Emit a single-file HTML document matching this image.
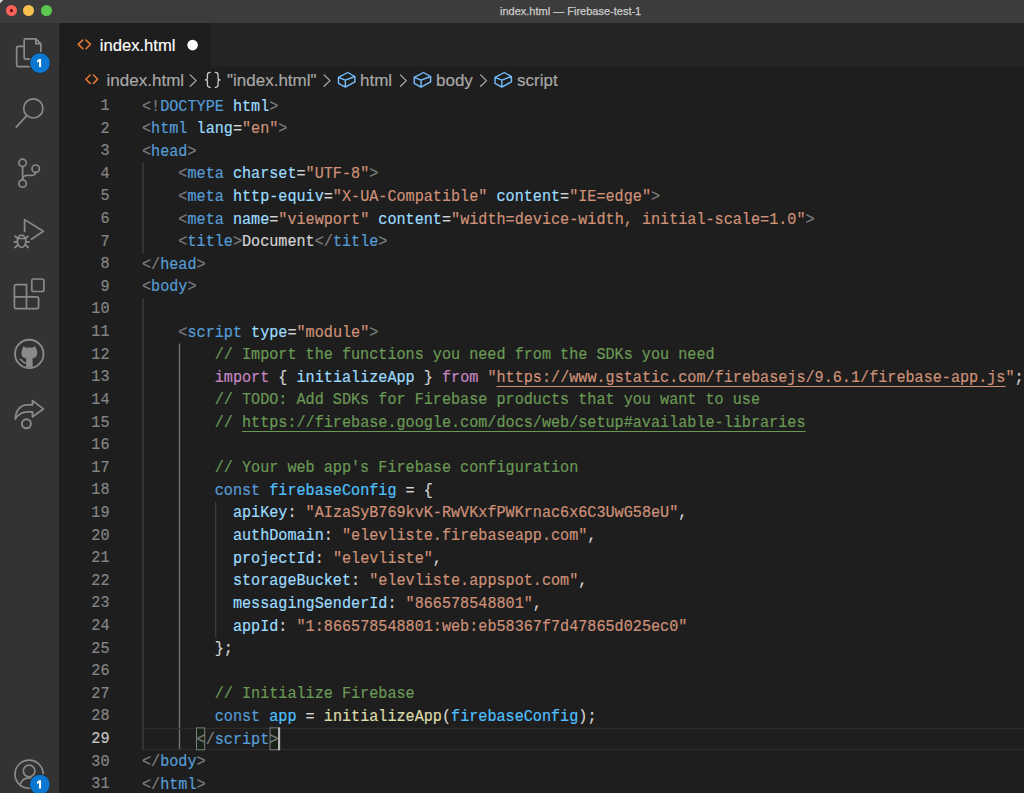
<!DOCTYPE html>
<html><head><meta charset="utf-8">
<style>
*{margin:0;padding:0;box-sizing:border-box}
html,body{width:1024px;height:793px;overflow:hidden;background:#1e1e1e}
body{position:relative;font-family:"Liberation Sans",sans-serif}
#title{position:absolute;left:0;top:0;width:1024px;height:23px;background:#3c3c3c}
#title .t{position:absolute;left:500px;top:5px;font-size:11px;color:#cccccc;white-space:pre;letter-spacing:0;-webkit-text-stroke:0.25px}
.tl{position:absolute;top:4.95px;width:11px;height:11px;border-radius:50%}
#act{position:absolute;left:0;top:23px;width:59px;height:770px;background:#333333}
#tabs{position:absolute;left:59px;top:23px;width:965px;height:43px;background:#252526}
#tab{position:absolute;left:60px;top:23px;width:150.6px;height:43px;background:#1e1e1e}
#tab .t{position:absolute;left:39.8px;top:13px;font-size:16.6px;color:#ffffff;white-space:pre;-webkit-text-stroke:0.15px}
#crumbs{position:absolute;left:59px;top:66px;width:965px;height:27px;background:#1e1e1e}
.cr{position:absolute;top:70.6px;font-size:17px;color:#a9a9a9;white-space:pre;-webkit-text-stroke:0.15px}
#code{position:absolute;left:142px;top:95.5px;font-family:"Liberation Mono",monospace;font-size:16.5px;line-height:22.62px;color:#d4d4d4;white-space:pre;transform-origin:0 0;transform:scaleX(0.91786);-webkit-text-stroke:0.2px}
#nums{position:absolute;left:50px;width:59.5px;top:95px;font-family:"Liberation Mono",monospace;font-size:16.5px;line-height:22.62px;color:#858585;white-space:pre;text-align:right;transform-origin:100% 0;transform:scaleX(0.91786);-webkit-text-stroke:0.2px}
#nums .cur{color:#c6c6c6}
.ln{height:22.62px}
svg{position:absolute;overflow:visible}
.g{position:absolute;width:1px;background:#404040}
.ga{background:#707070}
.bm{position:absolute;top:727.8px;width:8.7px;height:22.2px;background:#1a2a1a;border:1px solid #7a7a7a}
</style></head><body>
<div id="title"><div class="t">index.html — Firebase-test-1</div></div>
<div class="tl" style="left:5.85px;background:#fa6158"></div>
<div class="tl" style="left:23.4px;background:#f6c04f"></div>
<div class="tl" style="left:40.7px;background:#5dc650"></div>
<div style="position:absolute;left:9.65px;top:8.75px;width:3.4px;height:3.4px;border-radius:50%;background:#4d0000"></div>
<div id="act"></div>
<svg style="left:0;top:0" width="6" height="6"><path d="M0 0 H3.2 L0 3.2 Z" fill="#d8d8d8"/></svg>
<div id="tabs"></div>
<div id="tab"><div class="t">index.html</div></div>
<div id="crumbs"></div>

<!-- activity icons -->
<svg style="left:0;top:0" width="59" height="793" viewBox="0 0 59 793" fill="none" stroke="#8a8a8a" stroke-width="1.7" stroke-linecap="round" stroke-linejoin="round">
  <!-- explorer -->
  <path d="M24.15 46.4 H18.15 Q16.65 46.4 16.65 47.9 V65.2 Q16.65 66.7 18.15 66.7 H32"/>
  <path d="M35.8 38.9 H25.65 Q24.15 38.9 24.15 40.4 V57.7 Q24.15 59.2 25.65 59.2 H32 M40.8 52 V43.65 L35.8 38.9 V43.65 H40.8"/>
  <!-- search -->
  <circle cx="33.3" cy="108.4" r="9.6"/>
  <path d="M16.3 127.1 L26.6 115.6"/>
  <!-- scm -->
  <circle cx="22.6" cy="162.85" r="3.7"/>
  <circle cx="22.6" cy="183.5" r="3.7"/>
  <circle cx="35.7" cy="168.7" r="3.7"/>
  <path d="M22.6 166.6 V179.8"/>
  <path d="M22.6 178.5 C23 176 24.5 175.3 27 175.3 L31.5 175.3 C33.5 175.3 35.7 174 35.7 172.4"/>
  <!-- debug -->
  <path d="M24.6 231.4 V219.6 L43.3 231.2 L31.4 239.2"/>
  <ellipse cx="21.6" cy="241.3" rx="4.25" ry="6.1"/>
  <path d="M17.5 238.5 H25.7 M15 236.2 L17.8 238.5 M28.2 236.2 L25.4 238.5 M14.2 241.8 H17.2 M29 241.8 H26 M15 247.5 L17.8 245 M28.2 247.5 L25.4 245"/>
  <!-- extensions -->
  <rect x="31.8" y="279" width="12.1" height="12.5" rx="1.8"/>
  <path d="M16.2 284.7 H26.5 V296.8 H36.8 Q38.6 296.8 38.6 298.6 V306.8 Q38.6 308.6 36.8 308.6 H16.2 Q14.4 308.6 14.4 306.8 V286.5 Q14.4 284.7 16.2 284.7 Z M14.4 296.8 H26.5 V308.6"/>
  <!-- github -->
  <circle cx="29.25" cy="353.9" r="14.2" stroke-width="1.9"/>
  <path fill="#8a8a8a" stroke="none" d="M21.5 353 C21.5 350.5 22.2 349 23 348 L23 346.3 L26.5 347.8 C27.4 347.5 28.3 347.4 29.25 347.4 C30.2 347.4 31.1 347.5 32 347.8 L35.6 346.3 L35.6 348.1 C36.5 349 37.2 350.5 37.2 353 C37.2 356.5 35 358 32.5 358.3 L32.7 367.2 L26.1 367.2 L26.2 358.3 C23.5 358 21.5 356.5 21.5 353 Z"/>
  <path d="M20.2 359.5 C21.5 359.6 22.3 361 23.3 362 C24 362.8 25 363 26.1 362.9" stroke-width="1.5"/>
  <!-- live share -->
  <path d="M15.3 419 C15.5 410 21 404.85 27 404.85 L32.5 404.85 L32.5 400.6 L43.3 408.9 L32.5 416.7 L32.5 411.9 L27 411.9 C21 411.9 17.5 415.5 15.3 419 Z" stroke-width="1.8"/>
  <circle cx="26.4" cy="423.8" r="4.5" stroke-width="1.9"/>
  <!-- account -->
  <circle cx="29.1" cy="774.2" r="14.1"/>
  <circle cx="29.1" cy="771" r="5.8"/>
  <path d="M20 784.6 C21.5 780.5 25 777.8 29.1 777.8 C33.2 777.8 36.7 780.5 38.2 784.6"/>
  <!-- badges -->
  <circle cx="40.05" cy="63.1" r="10.4" fill="#0a78d2" stroke="#2b2b2b" stroke-width="1"/>
  <path fill="#fff" stroke="none" d="M39 58.9 H41.1 V67.1 H39 V61.5 L37.1 62.6 V60.5 Z"/>
  <circle cx="39.9" cy="784.6" r="10.4" fill="#0a78d2" stroke="#2b2b2b" stroke-width="1"/>
  <path fill="#fff" stroke="none" d="M38.9 780.3 H41.05 V788.6 H38.9 V782.9 L37 784 V781.9 Z"/>
</svg>

<!-- tab icons -->
<svg style="left:0;top:0" width="600" height="95" viewBox="0 0 600 95" fill="none" stroke-width="1.6" stroke-linecap="round" stroke-linejoin="round">
  <g stroke="#e37933">
    <path d="M82.8 40.05 L78.2 44.3 L82.8 48.7 M86.1 40.05 L90.5 44.3 L86.1 48.7"/>
    <path d="M90.1 75.0 L85.9 79.2 L90.1 83.4 M93.4 75.0 L97.6 79.2 L93.4 83.4"/>
  </g>
  <circle cx="192.6" cy="45.1" r="5.3" fill="#ffffff" stroke="none"/>
  <g stroke="#75beff" stroke-width="1.4">
    <path d="M347.8 72.5 L354.9 76.5 V81.9 L345.35 87.1 L338.5 83.4 V77.4 Z M338.5 77.4 L345.35 80.1 L354.9 76.5 M345.35 80.1 V87.1"/>
    <path transform="translate(75.7 0)" d="M347.8 72.5 L354.9 76.5 V81.9 L345.35 87.1 L338.5 83.4 V77.4 Z M338.5 77.4 L345.35 80.1 L354.9 76.5 M345.35 80.1 V87.1"/>
    <path transform="translate(156.5 0)" d="M347.8 72.5 L354.9 76.5 V81.9 L345.35 87.1 L338.5 83.4 V77.4 Z M338.5 77.4 L345.35 80.1 L354.9 76.5 M345.35 80.1 V87.1"/>
  </g>
  <g stroke="#a9a9a9" stroke-width="1.3">
    <path d="M190.25 74.9 L196.1 80.6 L190.25 86.3 M324.1 74.9 L330 80.6 L324.1 86.3 M400.4 74.9 L406.3 80.6 L400.4 86.3 M480.6 74.9 L486.5 80.6 L480.6 86.3"/>
    <path stroke="#c8c8c8" d="M210.2 72.4 C208.2 72.4 207.4 73.3 207.4 75 V78.2 C207.4 79.3 206.6 79.9 205.4 79.9 C206.6 79.9 207.4 80.5 207.4 81.6 V84.8 C207.4 86.5 208.2 87.3 210.2 87.3 M215.3 72.4 C217.3 72.4 218.1 73.3 218.1 75 V78.2 C218.1 79.3 218.9 79.9 220.1 79.9 C218.9 79.9 218.1 80.5 218.1 81.6 V84.8 C218.1 86.5 217.3 87.3 215.3 87.3"/>
  </g>
</svg>
<div class="cr" style="left:106.6px">index.html</div>
<div class="cr" style="left:227px">"index.html"</div>
<div class="cr" style="left:360px">html</div>
<div class="cr" style="left:436px">body</div>
<div class="cr" style="left:517px">script</div>

<svg id="ov" style="left:0;top:0" width="1024" height="793" viewBox="0 0 1024 793">
<rect x="142.2" y="162.8" width="1.6" height="90.4" fill="#3a3a3a"/>
<rect x="142.2" y="298.4" width="1.6" height="451.8" fill="#3a3a3a"/>
<rect x="178.8" y="343.6" width="1.4" height="406.6" fill="#727272"/>
<rect x="215" y="502" width="1.4" height="135.6" fill="#3a3a3a"/>
<rect x="142" y="727.8" width="890" height="1.2" fill="#2c2c2c"/>
<rect x="142" y="748.9" width="890" height="1.2" fill="#2c2c2c"/>
<rect x="196.5" y="727.9" width="8.2" height="21.9" fill="#162216" stroke="#7e7e7e" stroke-width="1"/>
<rect x="270.1" y="727.9" width="9.5" height="21.9" fill="#162216" stroke="#7e7e7e" stroke-width="1"/>
<rect x="278" y="727.6" width="2.1" height="22.5" fill="#b4b4b4"/>
</svg>
<div id="nums"><div class="ln">1</div><div class="ln">2</div><div class="ln">3</div><div class="ln">4</div><div class="ln">5</div><div class="ln">6</div><div class="ln">7</div><div class="ln">8</div><div class="ln">9</div><div class="ln">10</div><div class="ln">11</div><div class="ln">12</div><div class="ln">13</div><div class="ln">14</div><div class="ln">15</div><div class="ln">16</div><div class="ln">17</div><div class="ln">18</div><div class="ln">19</div><div class="ln">20</div><div class="ln">21</div><div class="ln">22</div><div class="ln">23</div><div class="ln">24</div><div class="ln">25</div><div class="ln">26</div><div class="ln">27</div><div class="ln">28</div><div class="ln cur">29</div><div class="ln">30</div><div class="ln">31</div></div>
<div id="code"><div class="ln"><span style="color:#808080">&lt;!</span><span style="color:#569cd6">DOCTYPE</span> <span style="color:#9cdcfe">html</span><span style="color:#808080">&gt;</span></div><div class="ln"><span style="color:#808080">&lt;</span><span style="color:#569cd6">html</span><span style="color:#9cdcfe"> lang</span><span style="color:#d4d4d4">=</span><span style="color:#ce9178">"en"</span><span style="color:#808080">&gt;</span></div><div class="ln"><span style="color:#808080">&lt;</span><span style="color:#569cd6">head</span><span style="color:#808080">&gt;</span></div><div class="ln">    <span style="color:#808080">&lt;</span><span style="color:#569cd6">meta</span><span style="color:#9cdcfe"> charset</span><span style="color:#d4d4d4">=</span><span style="color:#ce9178">"UTF-8"</span><span style="color:#808080">&gt;</span></div><div class="ln">    <span style="color:#808080">&lt;</span><span style="color:#569cd6">meta</span><span style="color:#9cdcfe"> http-equiv</span><span style="color:#d4d4d4">=</span><span style="color:#ce9178">"X-UA-Compatible"</span><span style="color:#9cdcfe"> content</span><span style="color:#d4d4d4">=</span><span style="color:#ce9178">"IE=edge"</span><span style="color:#808080">&gt;</span></div><div class="ln">    <span style="color:#808080">&lt;</span><span style="color:#569cd6">meta</span><span style="color:#9cdcfe"> name</span><span style="color:#d4d4d4">=</span><span style="color:#ce9178">"viewport"</span><span style="color:#9cdcfe"> content</span><span style="color:#d4d4d4">=</span><span style="color:#ce9178">"width=device-width, initial-scale=1.0"</span><span style="color:#808080">&gt;</span></div><div class="ln">    <span style="color:#808080">&lt;</span><span style="color:#569cd6">title</span><span style="color:#808080">&gt;</span><span style="color:#d4d4d4">Document</span><span style="color:#808080">&lt;/</span><span style="color:#569cd6">title</span><span style="color:#808080">&gt;</span></div><div class="ln"><span style="color:#808080">&lt;/</span><span style="color:#569cd6">head</span><span style="color:#808080">&gt;</span></div><div class="ln"><span style="color:#808080">&lt;</span><span style="color:#569cd6">body</span><span style="color:#808080">&gt;</span></div><div class="ln"></div><div class="ln">    <span style="color:#808080">&lt;</span><span style="color:#569cd6">script</span><span style="color:#9cdcfe"> type</span><span style="color:#d4d4d4">=</span><span style="color:#ce9178">"module"</span><span style="color:#808080">&gt;</span></div><div class="ln">        <span style="color:#6a9955">// Import the functions you need from the SDKs you need</span></div><div class="ln">        <span style="color:#c586c0">import</span><span style="color:#d4d4d4"> { </span><span style="color:#9cdcfe">initializeApp</span><span style="color:#d4d4d4"> } </span><span style="color:#c586c0">from</span><span style="color:#ce9178"> "</span><span style="color:#ce9178;text-decoration:underline;text-underline-offset:3.5px;text-decoration-thickness:1.4px">https://www.gstatic.com/firebasejs/9.6.1/firebase-app.js</span><span style="color:#ce9178">"</span><span style="color:#d4d4d4">;</span></div><div class="ln">        <span style="color:#6a9955">// TODO: Add SDKs for Firebase products that you want to use</span></div><div class="ln">        <span style="color:#6a9955">// </span><span style="color:#6a9955;text-decoration:underline;text-underline-offset:3.5px;text-decoration-thickness:1.4px">https://firebase.google.com/docs/web/setup#available-libraries</span></div><div class="ln"></div><div class="ln">        <span style="color:#6a9955">// Your web app's Firebase configuration</span></div><div class="ln">        <span style="color:#569cd6">const</span> <span style="color:#4fc1ff">firebaseConfig</span><span style="color:#d4d4d4"> = {</span></div><div class="ln">          <span style="color:#9cdcfe">apiKey</span><span style="color:#d4d4d4">: </span><span style="color:#ce9178">"AIzaSyB769kvK-RwVKxfPWKrnac6x6C3UwG58eU"</span><span style="color:#d4d4d4">,</span></div><div class="ln">          <span style="color:#9cdcfe">authDomain</span><span style="color:#d4d4d4">: </span><span style="color:#ce9178">"elevliste.firebaseapp.com"</span><span style="color:#d4d4d4">,</span></div><div class="ln">          <span style="color:#9cdcfe">projectId</span><span style="color:#d4d4d4">: </span><span style="color:#ce9178">"elevliste"</span><span style="color:#d4d4d4">,</span></div><div class="ln">          <span style="color:#9cdcfe">storageBucket</span><span style="color:#d4d4d4">: </span><span style="color:#ce9178">"elevliste.appspot.com"</span><span style="color:#d4d4d4">,</span></div><div class="ln">          <span style="color:#9cdcfe">messagingSenderId</span><span style="color:#d4d4d4">: </span><span style="color:#ce9178">"866578548801"</span><span style="color:#d4d4d4">,</span></div><div class="ln">          <span style="color:#9cdcfe">appId</span><span style="color:#d4d4d4">: </span><span style="color:#ce9178">"1:866578548801:web:eb58367f7d47865d025ec0"</span></div><div class="ln">        <span style="color:#d4d4d4">};</span></div><div class="ln"></div><div class="ln">        <span style="color:#6a9955">// Initialize Firebase</span></div><div class="ln">        <span style="color:#569cd6">const</span> <span style="color:#4fc1ff">app</span><span style="color:#d4d4d4"> = </span><span style="color:#dcdcaa">initializeApp</span><span style="color:#d4d4d4">(</span><span style="color:#4fc1ff">firebaseConfig</span><span style="color:#d4d4d4">);</span></div><div class="ln">      <span style="color:#808080">&lt;/</span><span style="color:#569cd6">script</span><span style="color:#808080">&gt;</span></div><div class="ln"><span style="color:#808080">&lt;/</span><span style="color:#569cd6">body</span><span style="color:#808080">&gt;</span></div><div class="ln"><span style="color:#808080">&lt;/</span><span style="color:#569cd6">html</span><span style="color:#808080">&gt;</span></div></div>
</body></html>
